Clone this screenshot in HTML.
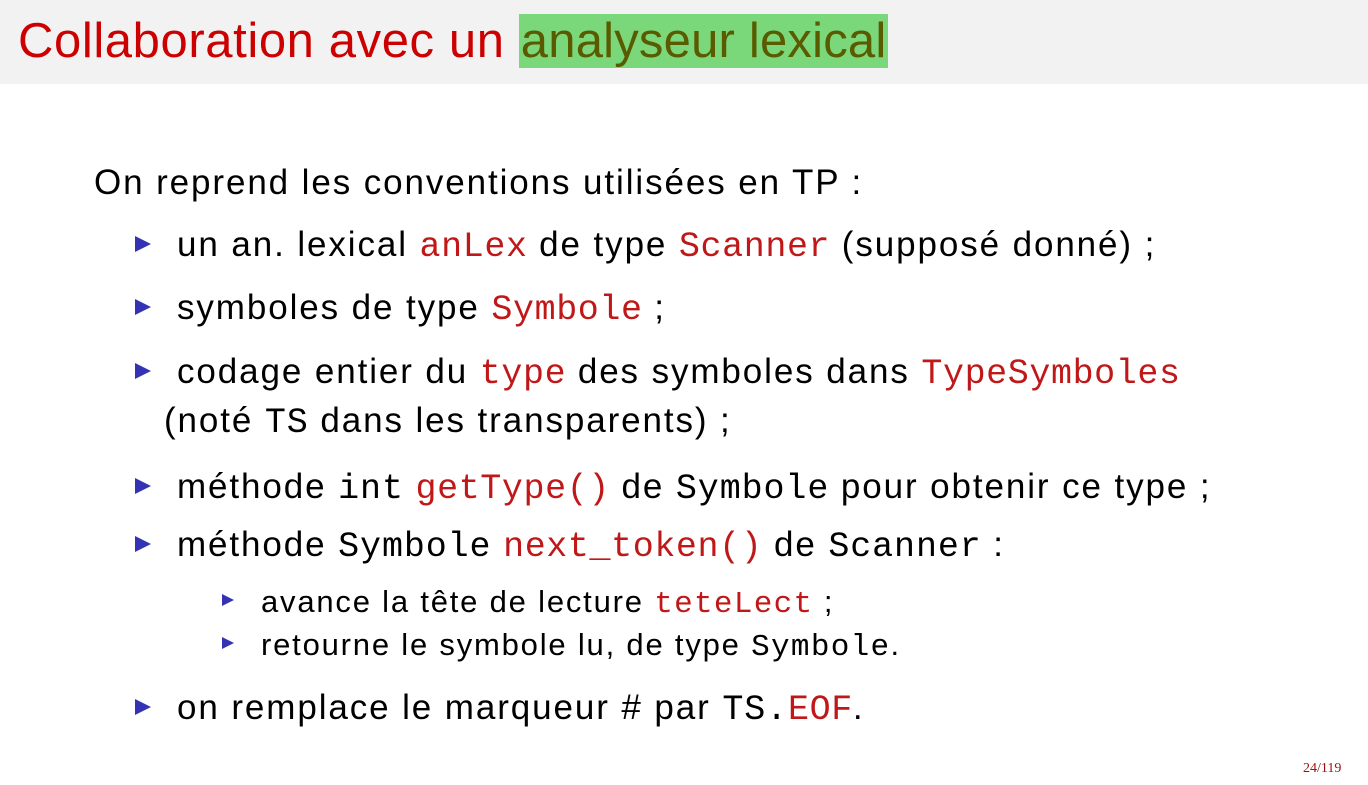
<!DOCTYPE html>
<html><head><meta charset="utf-8"><style>
body{margin:0;width:1368px;height:785px;background:#fff;position:relative;overflow:hidden;font-family:"Liberation Sans",sans-serif;color:#000}
.hd{position:absolute;left:0;top:0;width:1368px;height:84px;background:#f2f2f2}
.t{position:absolute;left:18px;top:13px;font-size:49px;line-height:57px;color:#cc0000;white-space:nowrap;letter-spacing:0.6px}
.hl{background:#7ad87a;color:#5a5a00;padding:0 2px 0 2px;letter-spacing:0.2px}
.l{position:absolute;white-space:nowrap;font-size:35px;line-height:1;letter-spacing:1.9px}
.s{font-size:31px;letter-spacing:1.8px}
.c{font-family:"Liberation Mono",monospace;font-size:35px;color:#c01818;letter-spacing:0.6px}
.k{font-family:"Liberation Mono",monospace;font-size:35px;letter-spacing:0.9px}
.s .c,.s .k{font-size:31px;letter-spacing:1.3px}
.b{position:absolute;width:0;height:0;border-left:16px solid #3333b3;border-top:8px solid transparent;border-bottom:8px solid transparent}
.bs{border-left-width:12px;border-top-width:6px;border-bottom-width:6px}
.f{position:absolute;left:1303px;top:761px;font-family:"Liberation Serif",serif;font-size:14px;color:#a01010}
</style></head><body>
<div class="hd"></div>
<div class="t">Collaboration avec un <span class="hl">analyseur lexical</span></div>
<div class="l" style="left:94px;top:165px">On reprend les conventions utilisées en TP :</div>
<div class="b" style="left:135px;top:236px"></div>
<div class="l" style="left:177px;top:227px">un an. lexical <span class="c">anLex</span> de type <span class="c">Scanner</span> (supposé donné) ;</div>
<div class="b" style="left:135px;top:299px"></div>
<div class="l" style="left:177px;top:290px">symboles de type <span class="c">Symbole</span> ;</div>
<div class="b" style="left:135px;top:363px"></div>
<div class="l" style="left:177px;top:354px">codage entier du <span class="c">type</span> des symboles dans <span class="c">TypeSymboles</span></div>
<div class="l" style="left:164px;top:403px">(noté <span class="k">TS</span> dans les transparents) ;</div>
<div class="b" style="left:135px;top:478px"></div>
<div class="l" style="left:177px;top:469px">méthode <span class="k">int</span> <span class="c">getType()</span> de <span class="k">Symbole</span> pour obtenir ce type ;</div>
<div class="b" style="left:135px;top:536px"></div>
<div class="l" style="left:177px;top:527px">méthode <span class="k">Symbole</span> <span class="c">next_token()</span> de <span class="k">Scanner</span> :</div>
<div class="b bs" style="left:222px;top:594px"></div>
<div class="l s" style="left:261px;top:586px">avance la tête de lecture <span class="c">teteLect</span> ;</div>
<div class="b bs" style="left:222px;top:637px"></div>
<div class="l s" style="left:261px;top:629px">retourne le symbole lu, de type <span class="k">Symbole</span>.</div>
<div class="b" style="left:135px;top:699px"></div>
<div class="l" style="left:177px;top:690px">on remplace le marqueur # par <span class="k">TS.</span><span class="c">EOF</span>.</div>
<div class="f">24/119</div>
</body></html>
